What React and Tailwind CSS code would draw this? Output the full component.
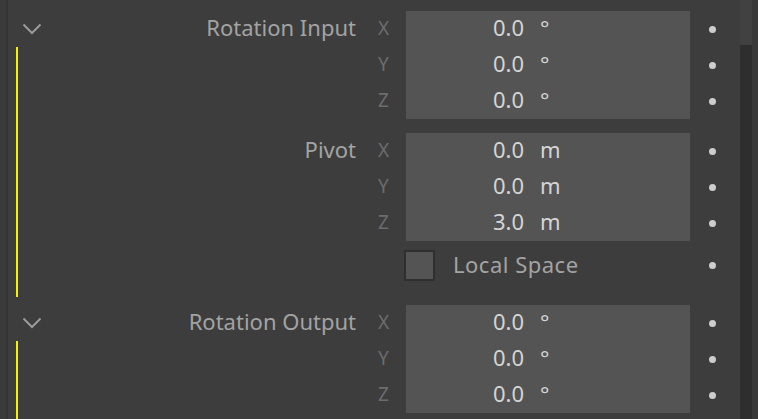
import React from "react";

const FONT = { fontFamily: "'Noto Sans', 'DejaVu Sans', sans-serif" };

function Chevron() {
  return (
    <svg width="20" height="12" viewBox="0 0 20 12" className="block">
      <polyline points="1.5,1.5 10,10 18.5,1.5" fill="none" stroke="#9a9a9a" strokeWidth="2" />
    </svg>
  );
}

function Dot() {
  return <div className="w-[7px] h-[7px] rounded-full bg-[#cdcdcd]" />;
}

function VectorGroup({ label, unit, values }) {
  const axes = ["X", "Y", "Z"];
  return (
    <div className="flex">
      <div className="w-[306px] h-[36px] pb-[4px] flex items-center justify-end text-[22px] text-[#a3a3a3]">
        {label}
      </div>
      <div className="w-[50px] flex flex-col">
        {axes.map((a) => (
          <div key={a} className="h-[36px] pb-[2px] flex items-center pl-[22px] text-[19px] text-[#6c6c6c]">
            {a}
          </div>
        ))}
      </div>
      <div className="w-[284px] bg-[#545454] flex flex-col">
        {values.map((v, i) => (
          <div key={i} className="h-[36px] pb-[4px] flex items-center text-[22px] text-[#d4d4d4]">
            <span className="w-[118px] text-right">{v}</span>
            <span className="ml-[16px]">{unit}</span>
          </div>
        ))}
      </div>
      <div className="w-[50px] flex flex-col">
        {axes.map((a) => (
          <div key={a} className="h-[36px] flex items-center pl-[19px]">
            <Dot />
          </div>
        ))}
      </div>
    </div>
  );
}

function Section({ children, last }) {
  return (
    <div className={last ? "flex flex-1" : "flex"}>
      <div className="w-[42px] flex flex-col">
        <div className="h-[36px] flex items-center pl-[14px]">
          <Chevron />
        </div>
        <div className="ml-[8px] w-[2px] flex-1 bg-[#f2f200]" />
      </div>
      <div className="flex flex-col">{children}</div>
    </div>
  );
}

export default function App() {
  return (
    <div className="w-[758px] h-[419px] overflow-hidden flex bg-[#3d3d3d]" style={FONT}>
      <div className="w-[6px] bg-[#3a3a3a]" />
      <div className="w-[2px] bg-[#343434]" />
      <div className="flex-1 flex flex-col pt-[11px] gap-[8px]">
        <Section>
          <VectorGroup label="Rotation Input" unit="°" values={["0.0", "0.0", "0.0"]} />
          <div className="mt-[14px]">
            <VectorGroup label="Pivot" unit="m" values={["0.0", "0.0", "3.0"]} />
          </div>
          <div className="mt-[6px] mb-[14px] h-[36px] flex items-center">
            <div className="w-[354px]" />
            <div className="w-[31px] h-[31px] border-2 border-[#2f2f2f] bg-[#545454]" />
            <span className="ml-[18px] mb-[2px] text-[22px] tracking-[0.5px] text-[#a3a3a3]">Local Space</span>
            <div className="flex-1" />
            <div className="w-[50px] pl-[19px] flex items-center">
              <Dot />
            </div>
          </div>
        </Section>
        <Section last>
          <div className="pb-[14px]">
            <VectorGroup label="Rotation Output" unit="°" values={["0.0", "0.0", "0.0"]} />
          </div>
        </Section>
      </div>
      <div className="w-[12px] flex flex-col">
        <div className="h-[45px] bg-[#414141]" />
        <div className="flex-1 bg-[#2e2e2e]" />
      </div>
      <div className="w-[6px] bg-[#393939]" />
    </div>
  );
}
